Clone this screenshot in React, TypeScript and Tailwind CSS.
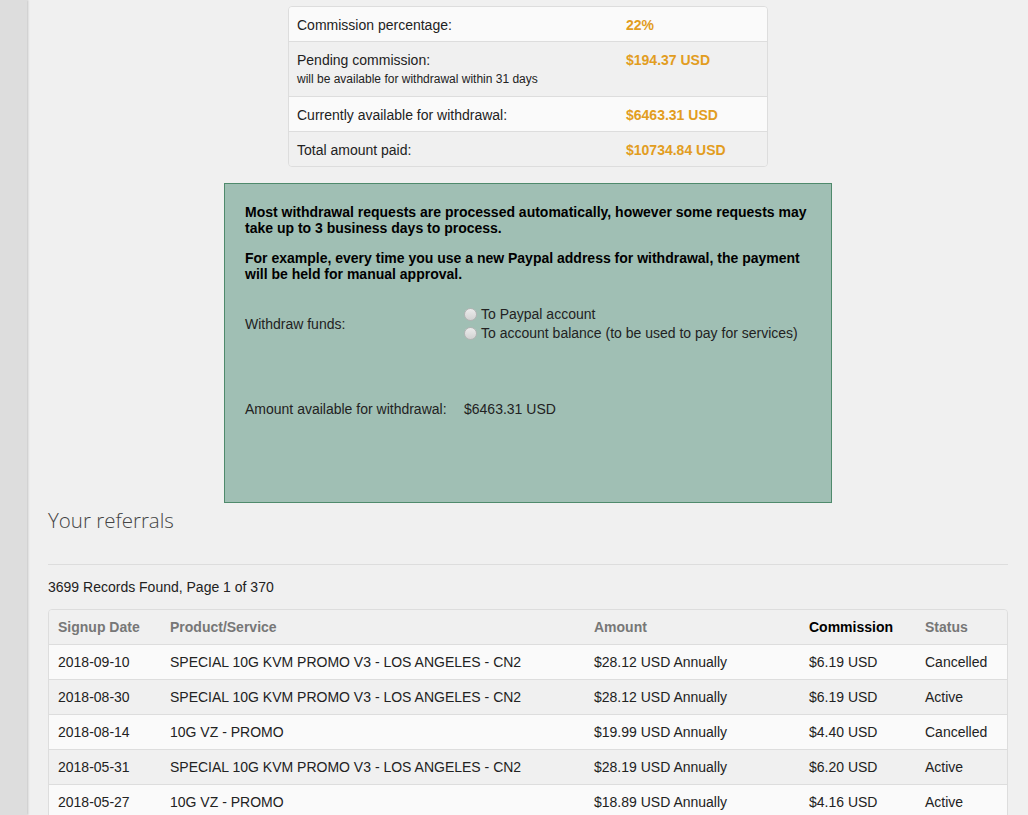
import React from "react";

const stats = [
  { label: "Commission percentage:", value: "22%" },
  { label: "Pending commission:", sub: "will be available for withdrawal within 31 days", value: "$194.37 USD" },
  { label: "Currently available for withdrawal:", value: "$6463.31 USD" },
  { label: "Total amount paid:", value: "$10734.84 USD" },
];

const rows = [
  ["2018-09-10", "SPECIAL 10G KVM PROMO V3 - LOS ANGELES - CN2", "$28.12 USD Annually", "$6.19 USD", "Cancelled"],
  ["2018-08-30", "SPECIAL 10G KVM PROMO V3 - LOS ANGELES - CN2", "$28.12 USD Annually", "$6.19 USD", "Active"],
  ["2018-08-14", "10G VZ - PROMO", "$19.99 USD Annually", "$4.40 USD", "Cancelled"],
  ["2018-05-31", "SPECIAL 10G KVM PROMO V3 - LOS ANGELES - CN2", "$28.19 USD Annually", "$6.20 USD", "Active"],
  ["2018-05-27", "10G VZ - PROMO", "$18.89 USD Annually", "$4.16 USD", "Active"],
];

function Radio({ label }: { label: string }) {
  return (
    <div className="flex items-center h-[19px]">
      <span className="inline-block w-[13px] h-[13px] rounded-full border border-[#b4b4b4] bg-gradient-to-b from-[#ececec] to-[#d2d2d2] mr-[4px]" />
      <span>{label}</span>
    </div>
  );
}

export default function App() {
  return (
    <div className="flex h-[815px] w-full overflow-hidden bg-[#f0f0f0] text-[14px] text-[#222]" style={{ fontFamily: '"Liberation Sans", Arial, sans-serif' }}>
      <div className="w-[27px] shrink-0 bg-[#dddddd] shadow-[1px_0_2px_rgba(0,0,0,0.18)]" />
      <div className="flex-1 pl-[21px] pr-[20px]">
        {/* Stats table */}
        <div className="mx-auto mt-[6px] w-[480px] rounded-[4px] border border-[#dddddd] overflow-hidden">
          {stats.map((s, i) => (
            <div key={i} className={`flex ${i > 0 ? "border-t border-[#dddddd]" : ""} ${i % 2 === 0 ? "bg-[#fafafa]" : "bg-[#f0f0f0]"}`}>
              <div className={`w-[337px] pl-[8px] ${s.sub ? "pt-[8px] pb-[9px]" : "pt-[8px] pb-[6px]"}`}>
                <div className="leading-[20px]">{s.label}</div>
                {s.sub && <div className="text-[12px] leading-[16px] mt-[1px]">{s.sub}</div>}
              </div>
              <div className="flex-1 pt-[8px] pb-[6px] leading-[20px] font-bold text-[#e29d1f]">{s.value}</div>
            </div>
          ))}
        </div>

        {/* Withdrawal box */}
        <div className="mx-auto mt-[16px] w-[608px] h-[320px] border border-[#4f8a6c] bg-[#a0bfb4] text-black px-[20px] pt-[20px]">
          <p className="font-bold text-[14px] leading-[16px]">
            Most withdrawal requests are processed automatically, however some requests may take up to 3 business days to process.
          </p>
          <p className="font-bold text-[14px] leading-[16px] mt-[14px]">
            For example, every time you use a new Paypal address for withdrawal, the payment will be held for manual approval.
          </p>
          <div className="flex items-center mt-[23px] text-[#222]">
            <div className="w-[219px]">Withdraw funds:</div>
            <div>
              <Radio label="To Paypal account" />
              <Radio label="To account balance (to be used to pay for services)" />
            </div>
          </div>
          <div className="flex items-center mt-[57px] h-[19px] text-[#222]">
            <div className="w-[219px]">Amount available for withdrawal:</div>
            <div>$6463.31 USD</div>
          </div>
        </div>

        {/* Referrals */}
        <h2 className="mt-[3px] text-[20.5px] leading-[28px] font-light text-[#444]" style={{ fontFamily: '"Open Sans", sans-serif' }}>
          Your referrals
        </h2>
        <div className="mt-[30px] border-t border-[#dddddd]" />
        <div className="mt-[14px] leading-[16px]">3699 Records Found, Page 1 of 370</div>

        <div className="mt-[14px] rounded-t-[4px] border border-[#dddddd] overflow-hidden">
          <div className="flex h-[34px] items-center bg-[#f0f0f0] font-bold text-[#777]">
            <div className="w-[112px] pl-[9px]">Signup Date</div>
            <div className="w-[424px] pl-[9px]">Product/Service</div>
            <div className="w-[215px] pl-[9px]">Amount</div>
            <div className="w-[116px] pl-[9px] text-black">Commission</div>
            <div className="flex-1 pl-[9px]">Status</div>
          </div>
          {rows.map((r, i) => (
            <div key={i} className={`flex h-[35px] items-center border-t border-[#dddddd] ${i % 2 === 0 ? "bg-[#fafafa]" : "bg-[#f0f0f0]"}`}>
              <div className="w-[112px] pl-[9px]">{r[0]}</div>
              <div className="w-[424px] pl-[9px]">{r[1]}</div>
              <div className="w-[215px] pl-[9px]">{r[2]}</div>
              <div className="w-[116px] pl-[9px]">{r[3]}</div>
              <div className="flex-1 pl-[9px]">{r[4]}</div>
            </div>
          ))}
        </div>
      </div>
    </div>
  );
}
